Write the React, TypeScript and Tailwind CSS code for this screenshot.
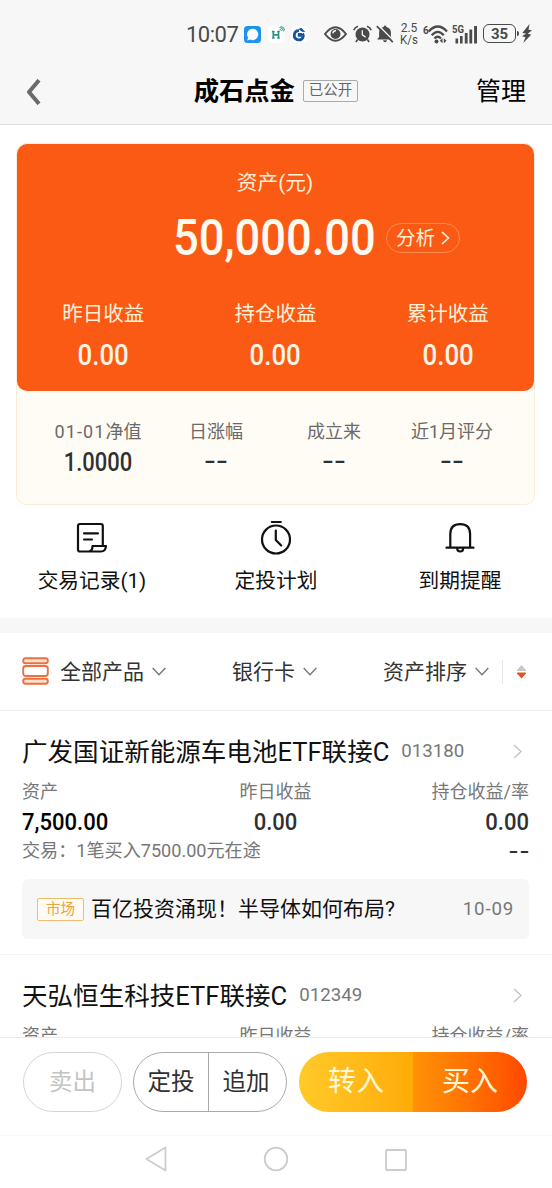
import type { ReactNode } from "react";

function StatusBar() {
  return (
    <div className="flex h-[60px] items-start pt-[22px] pl-[186px] text-[#4a4a4a]">
      <span className="w-[58px] pt-px text-[22px] leading-[24px] tracking-[-0.5px]">10:07</span>
      <svg className="mt-1 h-[17px] w-[17px]" viewBox="0 0 17 17">
        <rect width="17" height="17" rx="3.500" fill="#1e93ee" />
        <path d="M8.700 2.700a5.700 5.700 0 1 1-2.500 10.900l-3 .9.900-2.900A5.700 5.700 0 0 1 8.700 2.700z" fill="#fff" />
      </svg>
      <svg className="mt-1 ml-[7px] h-[17px] w-[17px]" viewBox="0 0 17 17">
        <rect width="17" height="17" rx="4" fill="#fff" />
        <path d="M4 5.500h2.600M4 12h2.600M9.200 5.500h2.600M9.200 12h2.600M5.300 5.500V12M10.500 5.500V12M5.300 8.800h5.200" stroke="#2a9483" strokeWidth="1.700" fill="none" />
        <path d="M11.500 1.500q3.500 0 4 3.800M12.500.4q3.800.3 4.300 4.200M11.700 3l2 2" stroke="#2a9483" strokeWidth="1" fill="none" />
      </svg>
      <svg className="mt-1 ml-[6px] h-[17px] w-[17px]" viewBox="0 0 17 17">
        <rect width="17" height="17" rx="4" fill="#fff" />
        <path d="M12 11.300A4.600 4.600 0 1 1 8 4.600" stroke="#17549e" strokeWidth="2.800" fill="none" />
        <path d="M7.500 3l2.800-1.300 4 4.400-3.200-.3zM6.800 7h4.200v3.800H6.800z" fill="#17549e" />
        <path d="M11.800 7.300a4.500 4.500 0 0 1 0 4.500" stroke="#17549e" strokeWidth="2.500" fill="none" />
      </svg>
      <svg className="mt-[4px] ml-[16px] h-[16px] w-[23px]" viewBox="0 0 23 16" fill="none" stroke="currentColor">
        <path d="M1 8Q11.500-5.500 22 8 11.500 21.500 1 8z" strokeWidth="2" />
        <circle cx="11.500" cy="8" r="5" fill="currentColor" stroke="none" />
        <path d="M8.800 7.300A3 3 0 0 1 12 4.800" stroke="#f7f7f7" strokeWidth="1.400" />
      </svg>
      <svg className="mt-[3px] ml-[6px] h-[18px] w-[19px]" viewBox="0 0 19 18" fill="none" stroke="currentColor">
        <circle cx="9.500" cy="9.500" r="7" fill="currentColor" stroke="none" />
        <path d="M.8 5.200Q1.900 2.400 5 1.300M18.200 5.200Q17.100 2.400 14 1.300M4.600 14.600l-1.700 2.300M14.400 14.600l1.700 2.300" strokeWidth="1.700" />
        <path d="M9.300 5.300v4.500l3.300 2.300" stroke="#f7f7f7" strokeWidth="1.300" />
      </svg>
      <svg className="mt-[3px] ml-[4px] h-[18px] w-[18px]" viewBox="0 0 18 18">
        <path d="M9 .5q1.400 0 1.400 1.500 4.500 1 4.500 5.500v4.500l2 2.500H1.100L3.100 12V7.500q0-4.500 4.500-5.500Q7.600.5 9 .5zM7 15.300h4Q10.500 17.300 9 17.300t-2-2z" fill="currentColor" />
        <path d="M2 0l16 16" stroke="#f7f7f7" strokeWidth="1.500" />
        <path d="M.8 1.200l16 16" stroke="currentColor" strokeWidth="1.700" />
      </svg>
      <div className="ml-[6px] w-[18px] text-center text-[12px] leading-[12px]">
        <div className="h-[12px]">2.5</div>
        <div className="-mx-1 h-[12px] scale-x-[0.95]">K/s</div>
      </div>
      <svg className="mt-[2px] ml-[5px] h-[20px] w-[25px]" viewBox="0 0 25 20" fill="none" stroke="currentColor">
        <text x="0" y="9.500" fontSize="10" fontWeight="700" fill="currentColor" stroke="none">6</text>
        <path d="M5.700 7.500Q14.700-2.500 24 7.500M8.700 11.300Q14.700 4.300 20.800 11.300M11.500 14.500Q14.700 11 18 14.500" strokeWidth="2.300" />
        <circle cx="13.500" cy="17.500" r="2" fill="currentColor" stroke="none" />
        <path d="M19.500 14.300v5l-2.700-2.500zM20.800 14.300v5l2.700-2.500z" fill="currentColor" stroke="none" />
      </svg>
      <svg className="mt-[2px] ml-[4px] h-[20px] w-[26px]" viewBox="0 0 26 20" fill="currentColor">
        <text x="0" y="9" fontSize="10" fontWeight="700" textLength="12" lengthAdjust="spacingAndGlyphs">5G</text>
        <path d="M3.500 14.500h2.600v5H3.500zM8 12h2.600v7.500H8zM12.800 9h2.800v10.500h-2.800zM17.400 5.500h2.800v14h-2.800zM22.100 2H25v17.500h-2.900z" />
      </svg>
      <div className="mt-[2px] ml-[5px] h-[19px] w-[33px] rounded-[6px] border-[1.5px] border-[#4a4a4a] text-center text-[15px] leading-[18px] font-bold">35</div>
      <div className="mt-[9px] ml-[1px] h-[5px] w-[2px] rounded-r bg-[#4a4a4a]" />
      <svg className="mt-[2px] ml-[3px] h-[19px] w-[10px]" viewBox="0 0 10 19">
        <path d="M7.500 0L.3 9l3.900.5L0 12.300l3.500 1L1.200 19l8-8.300-3.500-.9L10 6.300l-3.500-.6z" fill="currentColor" />
      </svg>
    </div>
  );
}

function Header() {
  return (
    <header className="flex h-16 items-start justify-between pr-[26px] pl-[26px]">
      <svg className="mt-[19px] h-[26px] w-[50px]" viewBox="0 0 50 26" fill="none" stroke="#6a6a6a" strokeWidth="4">
        <path d="M13 1.200L3 13l10 11.800" strokeLinejoin="round" />
      </svg>
      <div className="flex h-[62px] items-center">
        <h1 className="pt-px text-[25.300px] leading-[62px] font-bold text-black">成石点金</h1>
        <span className="ml-[8px] h-[22px] rounded-[2px] border border-[#aaa] px-[5px] text-[14.500px] leading-[20px] text-[#666]">已公开</span>
      </div>
      <span className="pt-px text-[25px] leading-[62px] text-black">管理</span>
    </header>
  );
}

function Profit({ label }: { label: string }) {
  return (
    <div className="flex-1 text-center">
      <div className="text-[20.500px] leading-[30px] text-[#fff0d8]">{label}</div>
      <div className="mt-[11px] scale-x-[0.89] text-[29px] leading-[30px] font-medium text-[#fff5e4]">0.00</div>
    </div>
  );
}

function Dashes({ className }: { className: string }) {
  return (
    <span className={className}>
      <span className="inline-block scale-x-[1.400]">-</span>
      <span className="ml-[4px] inline-block scale-x-[1.400]">-</span>
    </span>
  );
}

function Stat({ label, value }: { label: ReactNode; value?: string }) {
  return (
    <div className="w-[118px] text-center">
      <div className="text-[18px] leading-[26px] text-[#6b6a68]">{label}</div>
      {value ? (
        <div className="mt-px scale-x-[0.86] text-[25.500px] leading-[32px] font-medium text-[#303030]">{value}</div>
      ) : (
        <Dashes className="block text-[24px] leading-[32px] font-medium text-[#303030]" />
      )}
    </div>
  );
}

function AssetCard() {
  return (
    <section className="mt-[18px] mr-[17px] ml-4 h-[362px] rounded-[10px] border border-[#f8eedb] bg-[#fffcf6]">
      <div className="h-[247px] rounded-[10px] bg-[#fb5a14]">
        <div className="pt-[24px] pr-px text-center text-[20.700px] leading-[30px] text-[#fff0d8]">资产(元)</div>
        <div className="mt-[10px] flex h-[60px] items-center pl-[156px]">
          <span className="w-[206px] origin-left scale-x-[0.905] text-[50px] leading-[60px] font-medium whitespace-nowrap text-[#fffaf0]">50,000.00</span>
          <button className="ml-[7px] flex h-[30px] w-[74px] items-center justify-center gap-[6px] rounded-full border border-[#ff8a50] text-[19.500px] leading-none text-[#fff0d8]">
            <span className="pt-px">分析</span>
            <svg className="h-[14px] w-[9px]" viewBox="0 0 9 14" fill="none" stroke="currentColor" strokeWidth="1.700">
              <path d="M1 1l6.500 6L1 13" />
            </svg>
          </button>
        </div>
        <div className="mt-[31px] flex">
          <Profit label="昨日收益" />
          <Profit label="持仓收益" />
          <Profit label="累计收益" />
        </div>
      </div>
      <div className="flex pt-[28px] pl-[22px]">
        <Stat
          label={
            <>
              <span className="tracking-[1.100px]">01-01</span>净值
            </>
          }
          value="1.0000"
        />
        <Stat label="日涨幅" />
        <Stat label="成立来" />
        <Stat label="近1月评分" />
      </div>
    </section>
  );
}

function Action({ label, children }: { label: string; children: ReactNode }) {
  return (
    <div className="flex w-[184px] flex-col items-center">
      <svg className="h-[36px] w-[36px]" viewBox="0 0 36 36" fill="none" stroke="#111" strokeWidth="2.200" strokeLinecap="round" strokeLinejoin="round">
        {children}
      </svg>
      <div className="mt-[10px] text-[20.700px] leading-[30px] text-[#111]">{label}</div>
    </div>
  );
}

function Actions() {
  return (
    <section className="flex h-[113px] pt-[15px]">
      <Action label="交易记录(1)">
        <path d="M28.800 25.500V6q0-2-2-2H6q-2 0-2 2v23.500q0 2 2 2H27q4.500 0 5-5.500H18.500q0 5.500-4 5.500M10 13.300h14M10 19.500h8" />
      </Action>
      <Action label="定投计划">
        <circle cx="18" cy="19.500" r="14" />
        <path d="M13.800 2h9M17.800 10.500V20l5.400 5.500" />
      </Action>
      <Action label="到期提醒">
        <path d="M4.500 27.700h27M8.300 27V14q0-9.800 9.900-9.800T28.100 14v13M15.200 28.200q0 3.300 3 3.300t3-3.300" />
      </Action>
    </section>
  );
}

function Chevron({ className }: { className: string }) {
  return (
    <svg className={className} viewBox="0 0 14 9" fill="none" stroke="#777" strokeWidth="1.400">
      <path d="M.7 1L7 7.700 13.300 1" />
    </svg>
  );
}

function Filters() {
  return (
    <section className="flex h-[78px] items-center border-b border-[#ececec] pl-[22px] text-[21px] leading-[30px] text-[#333]">
      <svg className="mt-[-1px] h-[28px] w-[27px]" viewBox="0 0 27 28" fill="#ffe0cc" stroke="#ec7040" strokeWidth="1.900">
        <rect x="1.200" y="1.300" width="24.600" height="4.900" rx="2.200" />
        <rect x="1.200" y="9" width="24.600" height="10" rx="2.500" fill="#fff" />
        <rect x="1.200" y="21.800" width="24.600" height="4.900" rx="2.200" />
      </svg>
      <span className="ml-[11px] w-[92px]">全部产品</span>
      <Chevron className="h-[9px] w-[14px]" />
      <span className="ml-[66px] w-[71px]">银行卡</span>
      <Chevron className="h-[9px] w-[14px]" />
      <span className="ml-[66px] w-[92px]">资产排序</span>
      <Chevron className="h-[9px] w-[14px]" />
      <span className="ml-[13px] h-6 w-px bg-[#e8e8e8]" />
      <svg className="ml-[13px] h-[14px] w-[11px]" viewBox="0 0 11 14">
        <path d="M5.500 0l4.500 5q.5 1-.5 1h-8q-1 0-.5-1z" fill="#c8c8c8" />
        <path d="M5.500 13.500L1 8.500q-.5-1 .5-1h8q1 0 .5 1z" fill="#e35420" />
      </svg>
    </section>
  );
}

function FundTitle({ name, code }: { name: string; code: string }) {
  return (
    <div className="flex h-[36px] items-center">
      <h2 className="pt-px text-[25.550px] leading-[36px] whitespace-nowrap text-[#111]">{name}</h2>
      <span className="ml-[12px] text-[18.700px] leading-[36px] text-[#777]">{code}</span>
      <svg className="mr-[7px] ml-auto h-[15px] w-[9px]" viewBox="0 0 9 15" fill="none" stroke="#c4c4c4" strokeWidth="1.400">
        <path d="M1 1l7 6.500L1 14" />
      </svg>
    </div>
  );
}

function FundLabels() {
  return (
    <div className="grid grid-cols-3 text-[18px] leading-[26px] text-[#777]">
      <span>资产</span>
      <span className="text-center">昨日收益</span>
      <span className="text-right">持仓收益/率</span>
    </div>
  );
}

function FundList() {
  return (
    <section className="h-[326px] overflow-hidden">
      <article className="h-[244px] border-b border-[#f3f3f3] pt-[22px] pr-[23px] pl-[22px]">
        <FundTitle name="广发国证新能源车电池ETF联接C" code="013180" />
        <div className="mt-[10px]">
          <FundLabels />
        </div>
        <div className="mt-[2px] grid grid-cols-3 text-[24.500px] leading-[30px] font-medium text-[#303030]">
          <span className="origin-left scale-x-[0.9] text-black">7,500.00</span>
          <span className="scale-x-[0.9] text-center">0.00</span>
          <span className="origin-right scale-x-[0.9] text-right">0.00</span>
        </div>
        <div className="mt-px flex items-center justify-between text-[18.100px] leading-[26px] text-[#777]">
          <span>交易：1笔买入7500.00元在途</span>
          <Dashes className="pr-[1px] text-[20px] font-medium text-[#303030]" />
        </div>
        <div className="mt-[15px] flex h-[60px] items-center rounded-[6px] bg-[#f7f7f7] pr-[15px] pl-[15px]">
          <span className="h-[23px] w-[47px] rounded-[2px] border border-[#efbd70] bg-[#fffaf2] text-center text-[14.500px] leading-[21px] text-[#eca33a]">市场</span>
          <span className="ml-[7px] text-[21px] leading-[30px] text-[#111]">百亿投资涌现！半导体如何布局?</span>
          <span className="ml-auto text-[18.700px] tracking-[0.800px] text-[#777]">10-09</span>
        </div>
      </article>
      <article className="pt-[22px] pr-[23px] pl-[22px]">
        <FundTitle name="天弘恒生科技ETF联接C" code="012349" />
        <div className="mt-[10px]">
          <FundLabels />
        </div>
      </article>
    </section>
  );
}

function TradeBar() {
  return (
    <section className="flex h-[98px] items-start border-t border-[#eaeaea] pt-[14px] pl-[23px] text-[23.500px] leading-[57px]">
      <button className="h-[60px] w-[99px] rounded-full border border-[#d5d5d5] text-[#c4c4c4]">卖出</button>
      <div className="ml-[11px] flex h-[60px] w-[154px] rounded-full border border-[#aaa] text-[#303030]">
        <button className="flex-1 border-r border-[#aaa]">定投</button>
        <button className="flex-1 pr-[3px]">追加</button>
      </div>
      <div className="ml-[12px] flex h-[60px] w-[228px] overflow-hidden rounded-full text-[28px] leading-[58px] text-[#fff8d8]">
        <button className="flex-1 bg-linear-to-r from-[#ffca28] to-[#ffab05]">转入</button>
        <button className="flex-1 bg-linear-to-r from-[#ff9207] to-[#ff4700]">买入</button>
      </div>
    </section>
  );
}

function NavBar() {
  return (
    <nav className="flex h-[53px] items-center border-t border-[#f8f8f8] pl-[144px]">
      <svg className="mt-[-6px] h-[28px] w-[24px]" viewBox="0 0 24 28" fill="none" stroke="#ccc" strokeWidth="1.800" strokeLinejoin="round">
        <path d="M21.500 2.500v23L2.500 14z" />
      </svg>
      <svg className="mt-[-7px] ml-[95px] h-[26px] w-[26px]" viewBox="0 0 26 26" fill="none" stroke="#ccc" strokeWidth="1.800">
        <circle cx="13" cy="13" r="11.300" />
      </svg>
      <svg className="mt-[-5px] ml-[95px] h-[24px] w-[24px]" viewBox="0 0 24 24" fill="none" stroke="#ccc" strokeWidth="1.800">
        <rect x="2" y="2" width="20" height="20" rx="1" />
      </svg>
    </nav>
  );
}

export default function App() {
  return (
    <div className="h-[1188px] w-[552px] overflow-hidden bg-white font-[Roboto,'Noto_Sans_CJK_SC',sans-serif]">
      <div className="h-[125px] border-b border-[#ddd] bg-[#f7f7f7]">
        <StatusBar />
        <Header />
      </div>
      <AssetCard />
      <Actions />
      <div className="h-[15px] bg-[#f7f7f7]" />
      <Filters />
      <FundList />
      <TradeBar />
      <NavBar />
    </div>
  );
}
